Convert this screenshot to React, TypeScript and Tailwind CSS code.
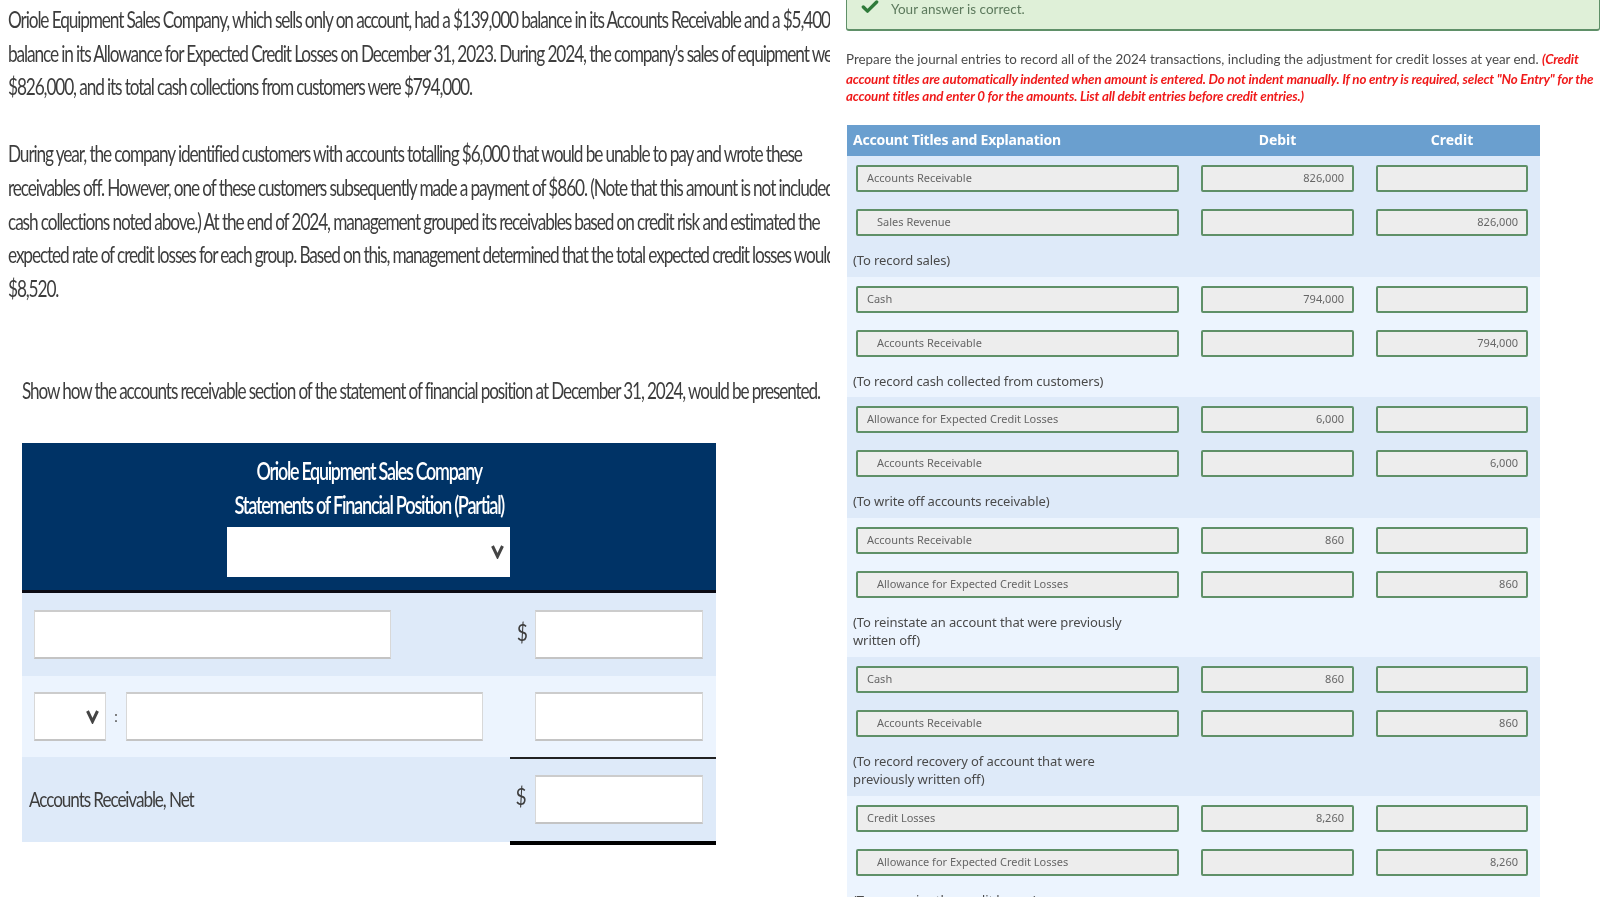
import React from "react";
import { Check } from "lucide-react";

const Line = ({ children, tight }: { children: React.ReactNode; tight?: boolean }) => (
  <div className="h-[33.6px] leading-[33.6px] whitespace-nowrap">
    <span className={`inline-block origin-left ${tight ? "scale-x-[0.714]" : "scale-x-[0.719]"}`}>{children}</span>
  </div>
);

const Vee = () => (
  <svg width="13" height="15" viewBox="0 0 13 15" fill="none">
    <polyline points="1.5,2 6.5,12.5 11.5,2" stroke="#444444" strokeWidth="3" />
  </svg>
);

const Box = ({ text, right, indent }: { text?: string; right?: boolean; indent?: boolean }) => (
  <div
    className={`h-[27px] bg-[#ededed] border-2 border-[#5f9068] rounded-[2px] flex items-center text-[11px] text-[#666666] [font-family:'Noto_Sans',sans-serif] ${
      right ? "justify-end pr-[8px]" : indent ? "pl-[19px]" : "pl-[9px]"
    }`}
  >
    {text}
  </div>
);

const Row = ({ title, debit, credit }: { title: string; debit?: string; credit?: string }) => (
  <div className="grid grid-cols-[323px_153px_152px] gap-x-[22px]">
    <Box text={title} indent={!!credit} />
    <Box text={debit} right />
    <Box text={credit} right />
  </div>
);

type Sec = { a: [string, string]; b: string; c: string; note: string[]; tint: string };

const sections: Sec[] = [
  { a: ["Accounts Receivable", "Sales Revenue"], b: "826,000", c: "826,000", note: ["(To record sales)"], tint: "bg-[#deeaf9]" },
  { a: ["Cash", "Accounts Receivable"], b: "794,000", c: "794,000", note: ["(To record cash collected from customers)"], tint: "bg-[#ecf4fe]" },
  { a: ["Allowance for Expected Credit Losses", "Accounts Receivable"], b: "6,000", c: "6,000", note: ["(To write off accounts receivable)"], tint: "bg-[#deeaf9]" },
  { a: ["Accounts Receivable", "Allowance for Expected Credit Losses"], b: "860", c: "860", note: ["(To reinstate an account that were previously", "written off)"], tint: "bg-[#ecf4fe]" },
  { a: ["Cash", "Accounts Receivable"], b: "860", c: "860", note: ["(To record recovery of account that were", "previously written off)"], tint: "bg-[#deeaf9]" },
  { a: ["Credit Losses", "Allowance for Expected Credit Losses"], b: "8,260", c: "8,260", note: ["(To recognize the credit losses)"], tint: "bg-[#ecf4fe]" },
];

const Field = ({ className, children }: { className: string; children?: React.ReactNode }) => (
  <div className={`bg-white border border-[#d8d8d8] border-b-2 border-b-[#c4c4c4] border-t-2 border-t-[#cccccc] ${className}`}>{children}</div>
);

export default function App() {
  return (
    <div className="w-[1600px] h-[900px] overflow-hidden bg-white flex blur-[0.35px] [font-family:'Lato',sans-serif]">
      <div className="w-[830px] shrink-0 overflow-hidden text-[#3d3d3d] text-[24px] tracking-[-1.55px]">
        <div className="pl-[8px] pt-[2px]">
          <Line>Oriole Equipment Sales Company, which sells only on account, had a $139,000 balance in its Accounts Receivable and a $5,400</Line>
          <Line>balance in its Allowance for Expected Credit Losses on December 31, 2023. During 2024, the company's sales of equipment were</Line>
          <Line>$826,000, and its total cash collections from customers were $794,000.</Line>
          <div className="h-[33.6px]" />
          <Line>During year, the company identified customers with accounts totalling $6,000 that would be unable to pay and wrote these</Line>
          <Line>receivables off. However, one of these customers subsequently made a payment of $860. (Note that this amount is not included in the</Line>
          <Line>cash collections noted above.) At the end of 2024, management grouped its receivables based on credit risk and estimated the</Line>
          <Line>expected rate of credit losses for each group. Based on this, management determined that the total expected credit losses would be</Line>
          <Line>$8,520.</Line>
        </div>
        <div className="pl-[22px] mt-[69px]">
          <Line tight>Show how the accounts receivable section of the statement of financial position at December 31, 2024, would be presented.</Line>
        </div>

        <div className="ml-[22px] mt-[36px] w-[694px]">
          <div className="h-[150px] bg-[#003366] border-b-[3px] border-b-[#0b0b14] flex flex-col items-center pt-[11px] text-white text-[24px]">
            <div className="h-[34px] leading-[34px] font-semibold tracking-[-1.7px] scale-x-[0.745] whitespace-nowrap">Oriole Equipment Sales Company</div>
            <div className="h-[34px] leading-[34px] font-semibold tracking-[-1.7px] scale-x-[0.76] whitespace-nowrap">Statements of Financial Position (Partial)</div>
            <div className="w-[283px] h-[50px] mt-[5px] -ml-[1px] bg-white flex items-center justify-end pr-[6px]">
              <Vee />
            </div>
          </div>
          <div className="h-[83px] bg-[#deeaf9] flex items-center pl-[12px]">
            <Field className="w-[357px] h-[49px]" />
            <div className="w-[144px] text-right pr-[7px] text-[24px] tracking-normal -mt-[4px]">
              <span className="inline-block scale-x-[0.8] origin-right">$</span>
            </div>
            <Field className="w-[168px] h-[49px]" />
          </div>
          <div className="h-[81px] bg-[#ecf4fe] flex items-center pl-[12px]">
            <Field className="w-[72px] h-[49px] flex items-center justify-end pr-[6px]">
              <Vee />
            </Field>
            <div className="w-[20px] text-center text-[16px] tracking-normal text-[#666666]">:</div>
            <Field className="w-[357px] h-[49px]" />
            <div className="w-[52px]" />
            <Field className="w-[168px] h-[49px]" />
          </div>
          <div className="relative h-[85px] bg-[#deeaf9] flex items-center pl-[7px]">
            <div className="w-[506px] text-[22px] tracking-[-1.4px] -mt-[2px] whitespace-nowrap">
              <span className="inline-block origin-left scale-x-[0.78]">Accounts Receivable, Net</span>
            </div>
            <Field className="w-[168px] h-[49px]" />
            <div className="absolute left-[488px] top-0 w-[206px] h-[2.5px] bg-[#222222]" />
            <div className="absolute left-[488px] bottom-[-3px] w-[206px] h-[4px] bg-black" />
            <div className="absolute left-[492px] top-[21px] text-[24px] tracking-normal scale-x-[0.8]">$</div>
          </div>
        </div>
      </div>

      <div className="w-[770px] pl-[16px] [font-family:'Noto_Sans',sans-serif]">
        <div className="h-[31px] bg-[#dff0d8] border-b-2 border-x border-[#5f9068] rounded-b-[3px] flex items-start pl-[13px]">
          <Check size={20} strokeWidth={4} className="text-[#2f7a3a] -mt-[3px]" />
          <span className="ml-[11px] text-[13.5px] leading-[18px] text-[#5d7a5d] [font-family:'Lato',sans-serif]">Your answer is correct.</span>
        </div>
        <div className="mt-[19px] text-[13.35px] leading-[18px] text-[#4a4a4a] whitespace-nowrap [font-family:'Lato',sans-serif]">
          <div className="h-[20px]">
            Prepare the journal entries to record all of the 2024 transactions, including the adjustment for credit losses at year end.{" "}
            <span className="italic font-bold text-[#f01a1a] tracking-[-0.2px]">(Credit</span>
          </div>
          <div className="italic font-bold text-[#f01a1a] tracking-[-0.17px]">
            <div className="h-[17px]">account titles are automatically indented when amount is entered. Do not indent manually. If no entry is required, select "No Entry" for the</div>
            <div className="h-[18px]">account titles and enter 0 for the amounts. List all debit entries before credit entries.)</div>
          </div>
        </div>
        <div className="w-[693px] mt-[20px] ml-[1px]">
          <div className="h-[31px] bg-[#6a9fcf] text-white text-[14px] font-bold flex items-center pb-[2px]">
            <div className="w-[354px] pl-[6px] tracking-[-0.25px] whitespace-nowrap">Account Titles and Explanation</div>
            <div className="w-[153px] text-center">Debit</div>
            <div className="w-[22px]" />
            <div className="w-[152px] text-center">Credit</div>
          </div>
          <div className="h-[741px] overflow-hidden">
            {sections.map((s, i) => (
              <div key={i} className={`${s.tint} pt-[9px] pl-[9px] ${i === 5 ? "h-[102px] overflow-hidden" : s.note.length === 2 ? "h-[139px]" : "h-[120.5px]"}`}>
                <div className="flex flex-col gap-[17px]">
                  <Row title={s.a[0]} debit={s.b} />
                  <Row title={s.a[1]} credit={s.c} />
                </div>
                <div className="-ml-[3px] mt-[15px] text-[13px] leading-[18px] tracking-[-0.1px] text-[#4a4a4a]">
                  {s.note.map((n) => (
                    <div key={n}>{n}</div>
                  ))}
                </div>
              </div>
            ))}
          </div>
        </div>
      </div>
    </div>
  );
}
